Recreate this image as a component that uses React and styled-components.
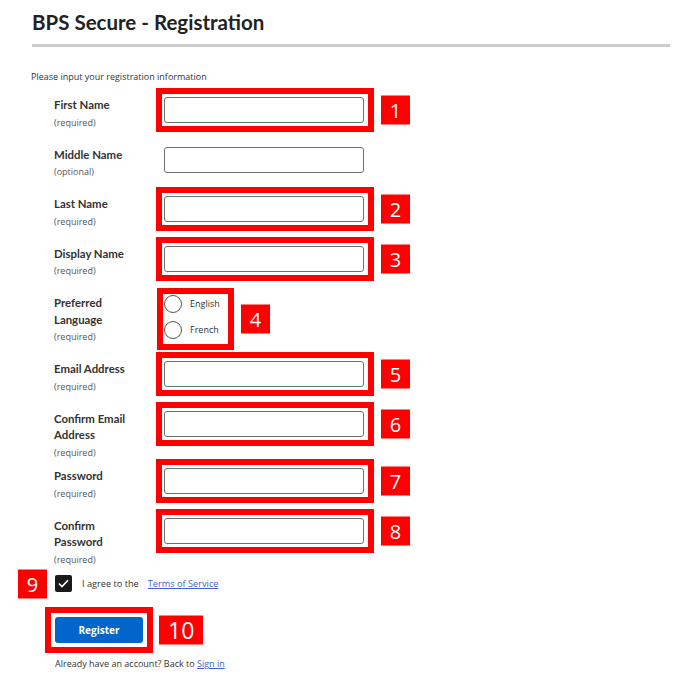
import styled, { createGlobalStyle } from 'styled-components';

const GlobalStyle = createGlobalStyle`
  html, body {
    margin: 0;
    background: #fff;
  }
  body {
    font-family: "Open Sans", "Liberation Sans", sans-serif;
    color: #333;
  }
`;

const Page = styled.div`
  padding: 10px 9px 20px 32px;
`;

const Title = styled.h1`
  margin: 0;
  font-family: Lato, "Open Sans", sans-serif;
  font-weight: 700;
  font-size: 20.5px;
  line-height: 24px;
  color: #222;
`;

const Divider = styled.div`
  height: 3px;
  background: #cccccc;
  margin-top: 10px;
`;

const Intro = styled.p`
  margin: 23px 0 14px -1px;
  font-size: 9px;
  line-height: 13px;
  color: #333;
`;

const Form = styled.form`
  padding-left: 22px;
`;

const Row = styled.div`
  display: flex;
  align-items: flex-start;
  min-height: 42px;
  margin-bottom: 7.5px;
`;

const LabelCol = styled.div`
  width: 110px;
  flex-shrink: 0;
`;

const Label = styled.div`
  max-width: 88px;
  font-family: Lato, "Open Sans", sans-serif;
  font-weight: 700;
  font-size: 11.4px;
  line-height: 16.5px;
  color: #333;
`;

const Hint = styled.div`
  font-size: 9px;
  line-height: 17px;
  color: #555;
`;

/* red annotation frame drawn over the marked control */
const Field = styled.div`
  position: relative;
  width: 200px;
  &::after {
    content: '';
    display: ${({ $marked }) => ($marked ? 'block' : 'none')};
    position: absolute;
    inset: -9px -10px -9px -8px;
    border: 6px solid #ff0000;
    pointer-events: none;
  }
`;

const TextInput = styled.input`
  display: block;
  box-sizing: border-box;
  width: 200px;
  height: 26px;
  border: 1.5px solid #707070;
  border-radius: 3px;
  background: #fff;
  outline: none;
`;

const Badge = styled.span`
  position: absolute;
  top: 50%;
  transform: translateY(-50%);
  ${({ $side }) => ($side === 'left' ? 'right: calc(100% + 8px);' : 'left: calc(100% + 17px);')}
  min-width: 29px;
  height: 29px;
  padding: 0 ${({ $wide }) => ($wide ? 9 : 4)}px;
  box-sizing: border-box;
  background: #ff0000;
  color: #fff;
  font-family: "Open Sans", sans-serif;
  font-size: ${({ $wide }) => ($wide ? 23 : 20)}px;
  line-height: 29px;
  text-align: center;
`;

const RadioGroup = styled.div`
  position: relative;
  box-sizing: border-box;
  width: 65px;
  height: 50px;
  margin: -1.5px 0 10px -1px;
  padding: 1px 0 0 1px;
  display: flex;
  flex-direction: column;
  gap: 8px;
  &::after {
    content: '';
    position: absolute;
    inset: -6px;
    border: 6px solid #ff0000;
    pointer-events: none;
  }
  & ${Badge} {
    left: calc(100% + 13px);
  }
`;

const RadioItem = styled.label`
  display: flex;
  align-items: center;
  gap: 8px;
  height: 18px;
  font-size: 9px;
  color: #333;
`;

const Circle = styled.span`
  width: 18px;
  height: 18px;
  box-sizing: border-box;
  border: 1.5px solid #555;
  border-radius: 50%;
`;

const CheckRow = styled.div`
  display: flex;
  align-items: center;
  gap: 10px;
  font-size: 9.2px;
  color: #333;
  padding-left: 1px;
`;

const CheckBox = styled.span`
  position: relative;
  width: 17px;
  height: 17px;
  border-radius: 2px;
  background: #1a1a1a;
  display: flex;
  align-items: center;
  justify-content: center;
`;

const Link = styled.a`
  color: #3f63c9;
  text-decoration: underline;
  margin-left: ${({ $gap }) => $gap || 0}px;
`;

const ButtonWrap = styled.div`
  position: relative;
  width: 88px;
  margin: 25px 0 0 1px;
  &::after {
    content: '';
    position: absolute;
    inset: -10px;
    border: 6px solid #ff0000;
    pointer-events: none;
  }
  & ${Badge} {
    left: calc(100% + 16px);
  }
`;

const Button = styled.button`
  display: block;
  width: 88px;
  height: 26px;
  border: none;
  border-radius: 3px;
  background: #0066cc;
  color: #fff;
  font-family: "Open Sans", sans-serif;
  font-weight: 700;
  font-size: 10px;
`;

const Footer = styled.p`
  margin: 14px 0 0 1px;
  font-size: 9px;
  line-height: 13px;
  color: #333;
`;

const fields = [
  { label: 'First Name', hint: '(required)', n: 1 },
  { label: 'Middle Name', hint: '(optional)' },
  { label: 'Last Name', hint: '(required)', n: 2 },
  { label: 'Display Name', hint: '(required)', n: 3 },
  { label: 'Preferred Language', hint: '(required)', n: 4, radio: true },
  { label: 'Email Address', hint: '(required)', n: 5 },
  { label: 'Confirm Email Address', hint: '(required)', n: 6 },
  { label: 'Password', hint: '(required)', n: 7, type: 'password' },
  { label: 'Confirm Password', hint: '(required)', n: 8, type: 'password' },
];

export default function App() {
  return (
    <>
      <GlobalStyle />
      <Page>
        <Title>BPS Secure - Registration</Title>
        <Divider />
        <Intro>Please input your registration information</Intro>
        <Form onSubmit={(e) => e.preventDefault()}>
          {fields.map((f) => (
            <Row key={f.label}>
              <LabelCol>
                <Label>{f.label}</Label>
                <Hint>{f.hint}</Hint>
              </LabelCol>
              {f.radio ? (
                <RadioGroup>
                  <RadioItem>
                    <Circle />
                    English
                  </RadioItem>
                  <RadioItem>
                    <Circle />
                    French
                  </RadioItem>
                  <Badge>{f.n}</Badge>
                </RadioGroup>
              ) : (
                <Field $marked={!!f.n}>
                  <TextInput type={f.type || 'text'} />
                  {f.n && <Badge>{f.n}</Badge>}
                </Field>
              )}
            </Row>
          ))}
          <CheckRow>
            <CheckBox>
              <svg width="11" height="9" viewBox="0 0 11 9">
                <path d="M1 4.5 L4 7.5 L10 1.2" fill="none" stroke="#fff" strokeWidth="1.6" />
              </svg>
              <Badge $side="left">9</Badge>
            </CheckBox>
            <span>
              I agree to the
              <Link href="#" $gap={9}>Terms of Service</Link>
            </span>
          </CheckRow>
          <ButtonWrap>
            <Button type="submit">Register</Button>
            <Badge $wide>10</Badge>
          </ButtonWrap>
          <Footer>
            Already have an account? Back to <Link href="#">Sign in</Link>
          </Footer>
        </Form>
      </Page>
    </>
  );
}
